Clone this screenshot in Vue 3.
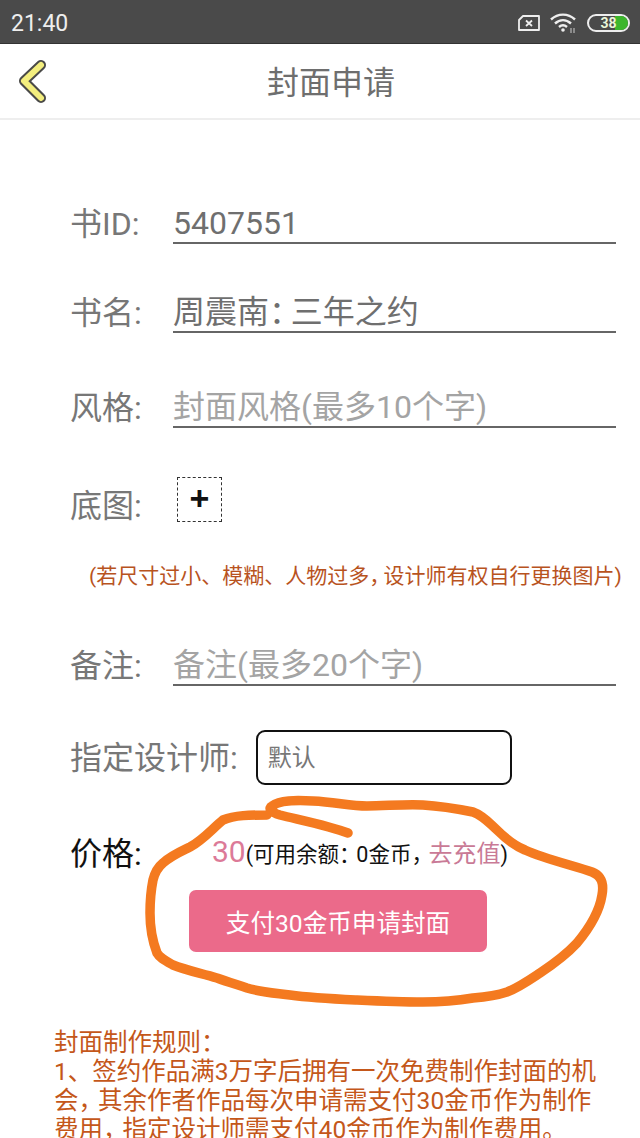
<template>
  <div class="page">
    <div class="status">
      <span class="time">21:40</span>
      <div class="status-icons">
        <svg width="24" height="18" viewBox="0 0 24 18">
          <path d="M6 2H22V16H2V6Z" fill="none" stroke="#eee" stroke-width="1.8" stroke-linejoin="round" />
          <path d="M9 6.5l6 5.5M15 6.5l-6 5.5" stroke="#eee" stroke-width="1.8" />
        </svg>
        <svg width="30" height="20" viewBox="0 0 30 20">
          <path d="M2 6.5C9 0 19 0 26 6.5" fill="none" stroke="#eee" stroke-width="2.4" />
          <path d="M6 10.5C11 6 17 6 22 10.5" fill="none" stroke="#eee" stroke-width="2.4" />
          <path d="M10 14C12.5 11.8 15.5 11.8 18 14" fill="none" stroke="#eee" stroke-width="2.4" />
          <circle cx="14" cy="17" r="1.8" fill="#eee" />
          <path d="M22 15v5M25 15v5" stroke="#ccc" stroke-width="1" />
        </svg>
        <div class="battery">
          <div class="battery-fill"></div>
          <span class="battery-num">38</span>
        </div>
      </div>
    </div>

    <header class="top">
      <svg class="back" width="32" height="46" viewBox="0 0 32 46">
        <path d="M24 7L7 23L24 40" fill="none" stroke="#4a4a48" stroke-width="10" stroke-linecap="round" stroke-linejoin="round" />
        <path d="M24 7L7 23L24 40" fill="none" stroke="#f3ee7e" stroke-width="6" stroke-linecap="round" stroke-linejoin="round" />
      </svg>
      <h1 class="title">封面申请</h1>
    </header>

    <div class="form">
      <div class="row row-id">
        <label>书ID:</label>
        <div class="field value">5407551</div>
      </div>
      <div class="row row-name">
        <label>书名:</label>
        <div class="field value">周震南<span class="p">：</span>三年之约</div>
      </div>
      <div class="row row-style">
        <label>风格:</label>
        <div class="field hint">封面风格(最多10个字)</div>
      </div>
      <div class="row row-pic">
        <label>底图:</label>
        <div class="add">+</div>
      </div>
      <p class="warn">(若尺寸过小、模糊、人物过多<span class="p">，</span>设计师有权自行更换图片)</p>
      <div class="row row-note">
        <label>备注:</label>
        <div class="field hint">备注(最多20个字)</div>
      </div>
      <div class="row row-designer">
        <label>指定设计师:</label>
        <div class="select">默认</div>
      </div>
      <div class="row row-price">
        <label class="dark">价格:</label>
        <div class="price-line">
          <span class="num">30</span><span>(可用余额<span class="p2">：</span>0金币<span class="p2">，</span></span><span class="link">去充值</span><span>)</span>
        </div>
      </div>
      <button class="pay">支付30金币申请封面</button>
      <div class="rules">
        <div>封面制作规则<span class="p">：</span></div>
        <div>1、签约作品满3万字后拥有一次免费制作封面的机会<span class="p2">，</span>其余作者作品每次申请需支付30金币作为制作费用<span class="p2">，</span>指定设计师需支付40金币作为制作费用。</div>
      </div>
    </div>

    <svg class="scribble" width="640" height="1138" viewBox="0 0 640 1138">
      <path
        d="M348 833C330 826 300 820 280 815C270 812 268 808 272 806C280 800 295 800 313 801C335 802 350 806 367 806C385 806 405 804 423 805C440 806 458 809 473 812C484 816 490 824 497 830C505 838 513 845 525 850C545 859 575 866 592 872C602 876 604 884 602 895C600 908 592 925 577 943C565 956 552 965 540 973C528 981 518 988 507 992C495 996 485 997 473 998C455 1001 440 1002 423 1002C400 1002 378 1001 357 1000C335 999 312 998 290 995C275 993 260 992 247 988C235 984 228 982 217 978C200 973 185 970 173 965C164 960 160 958 157 953C152 940 150 925 150 913C150 900 151 890 153 880C155 872 158 867 163 863C172 855 182 851 190 847C203 840 213 828 223 820C235 815 250 815 267 815"
        fill="none" stroke="#f47a20" stroke-width="9.5" stroke-linecap="round" stroke-linejoin="round"
      />
    </svg>
  </div>
</template>

<script setup>
</script>

<style>
html, body { margin: 0; background: #fff; }
</style>

<style scoped>
.page {
  position: relative;
  width: 640px;
  height: 1138px;
  overflow: hidden;
  background: #fff;
  font-family: "Roboto", "Noto Sans CJK SC", sans-serif;
  color: #6f6f6f;
}
.status {
  height: 43px;
  background: #4a4a4a;
  border-bottom: 1px solid #333;
  display: flex;
  align-items: center;
  justify-content: space-between;
  padding: 0 10px 0 11px;
}
.time { color: #eee; font-size: 23px; padding-top: 4px; }
.status-icons { display: flex; align-items: center; gap: 8px; padding-top: 2px; }
.battery {
  position: relative;
  width: 39px;
  height: 14px;
  border: 2px solid #eee;
  border-radius: 9px;
  overflow: hidden;
  text-align: center;
}
.battery-fill { position: absolute; right: 0; top: 0; bottom: 0; width: 13px; background: #3cb62c; }
.battery-num { position: relative; display: block; color: #e8f5d8; font-size: 14px; line-height: 14px; font-weight: 700; }

.top {
  height: 74px;
  border-bottom: 2px solid #eee;
  display: flex;
  align-items: center;
  justify-content: center;
  position: relative;
}
.back { position: absolute; left: 17px; top: 14px; }
.title { margin: 0 0 2px 22px; font-size: 32px; font-weight: 400; color: #6e6e6e; }

.form { padding: 0 24px 0 70px; }
.row { display: flex; align-items: flex-end; }
label { font-size: 32px; line-height: 40px; color: #777; width: 103px; flex-shrink: 0; }
label.dark { color: #111; }
.field {
  flex: 1;
  height: 39px;
  line-height: 41px;
  font-size: 32px;
  border-bottom: 2px solid #666;
}
.value { color: #6f6f6f; }
.hint { color: #a4a4a4; }
.p { letter-spacing: -0.32em; }
.p2 { letter-spacing: -0.2em; }

.row-id { margin-top: 83px; }
.row-name { margin-top: 48px; }
.row-style { margin-top: 54px; }
.row-pic { margin-top: 58px; align-items: flex-start; }
.add {
  width: 43px;
  height: 43px;
  border: 1.5px dashed #333;
  color: #111;
  font-size: 34px;
  font-weight: 700;
  line-height: 40px;
  text-align: center;
  margin: -9px 0 0 4px;
  font-family: "Liberation Sans", sans-serif;
}
.warn {
  margin: 35px 0 0 19px;
  white-space: nowrap;
  font-size: 21px;
  line-height: 30px;
  color: #b8531e;
}
.row-note { margin-top: 54px; }
.row-designer { margin-top: 44px; align-items: center; }
.row-designer label { width: auto; }
.select {
  width: 256px;
  height: 55px;
  margin-left: 18px;
  border: 2px solid #111;
  border-radius: 9px;
  box-sizing: border-box;
  line-height: 52px;
  padding-left: 10px;
  font-size: 24px;
  color: #777;
}
.row-price { margin-top: 47px; align-items: center; }
.price-line { color: #111; font-size: 21.5px; line-height: 40px; margin-left: 39px; white-space: nowrap; }
.num { color: #dc7a98; font-size: 30px; }
.link { color: #c97a96; font-size: 24px; }
.pay {
  display: block;
  width: 298px;
  height: 62px;
  margin: 15px 0 0 119px;
  border: 0;
  border-radius: 7px;
  background: #eb6a8a;
  color: #fff;
  font-family: inherit;
  font-size: 24.6px;
}
.rules {
  margin: 76px 6px 0 -16px;
  font-size: 24.5px;
  line-height: 29px;
  color: #c4571a;
}
.scribble { position: absolute; left: 0; top: 0; pointer-events: none; }
</style>
